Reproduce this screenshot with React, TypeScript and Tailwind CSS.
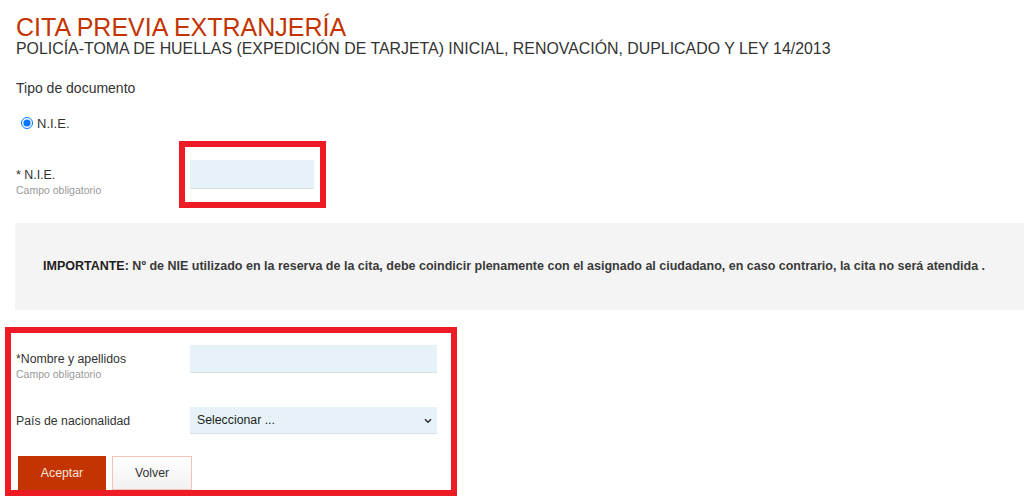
import React from "react";

export default function App() {
  return (
    <div className="w-[1024px] h-[498px] overflow-hidden bg-white font-['Liberation_Sans',Arial,sans-serif] text-[#333]">
      <div className="flex flex-col px-[16px] pt-[14px]">
        <h1 className="text-[25px] leading-[26px] text-[#c33400] font-normal">CITA PREVIA EXTRANJERÍA</h1>
        <h2 className="text-[15.9px] leading-[17px] text-[#333] font-normal">
          POLICÍA-TOMA DE HUELLAS (EXPEDICIÓN DE TARJETA) INICIAL, RENOVACIÓN, DUPLICADO Y LEY 14/2013
        </h2>

        <div className="mt-[23px] text-[14px] leading-[16px]">Tipo de documento</div>

        <label className="mt-[17px] flex h-[20px] items-center">
          <input type="radio" defaultChecked name="doc" className="ml-[5px] mr-[4px] h-[12px] w-[12px] accent-[#0075ff]" />
          <span className="text-[13px] leading-[15px]">N.I.E.</span>
        </label>

        <div className="mt-[8px] flex items-start">
          <div className="mt-[27px] flex w-[163px] flex-col">
            <span className="text-[12.4px] leading-[15px]">* N.I.E.</span>
            <span className="mt-[1px] text-[10.5px] leading-[13px] text-[#999]">Campo obligatorio</span>
          </div>
          <div className="border-[6px] border-[#ed1c24] py-[13px] pl-[5px] pr-[6px]">
            <input
              type="text"
              className="block h-[29px] w-[124px] border-0 border-b border-[#d6e0e5] bg-[#e6f2f7] outline-none"
            />
          </div>
        </div>

        <div className="mt-[15px] -ml-px -mr-[16px] flex h-[87px] items-center bg-[#f4f4f4] pl-[28px]">
          <p className="text-[12.5px] font-bold text-[#3a3a3a]">
            <span className="text-[#1e1e1e]">IMPORTANTE:</span> Nº de NIE utilizado en la reserva de la cita, debe coindicir plenamente con el asignado al ciudadano, en caso contrario, la cita no será atendida .
          </p>
        </div>

        <div className="mt-[17px] -ml-[11px] flex w-[452px] flex-col border-[6px] border-[#ed1c24] pl-[5px] pt-[12px]">
          <div className="flex items-start">
            <div className="mt-[6px] flex w-[174px] flex-col">
              <span className="text-[12.3px] leading-[16px]">*Nombre y apellidos</span>
              <span className="mt-[1px] text-[10.5px] leading-[13px] text-[#999]">Campo obligatorio</span>
            </div>
            <input
              type="text"
              className="block h-[28px] w-[247px] border-0 border-b border-[#d6e0e5] bg-[#e6f2f7] outline-none"
            />
          </div>

          <div className="mt-[26px] flex items-center">
            <span className="w-[174px] text-[12.3px] leading-[16px]">País de nacionalidad</span>
            <div className="relative h-[27px] w-[247px] border-b border-[#d6e0e5] bg-[#e6f2f7]">
              <div className="flex h-full items-center pl-[7px] text-[12.3px] text-[#1e1e1e]">Seleccionar ...</div>
              <svg className="absolute right-[5px] top-[11px]" width="8" height="6" viewBox="0 0 8 6">
                <path d="M1 1.2 L4 4.2 L7 1.2" fill="none" stroke="#333" strokeWidth="1.6" />
              </svg>
            </div>
          </div>

          <div className="mt-[22px] flex gap-[6px] pl-[2px]">
            <button className="h-[34px] w-[88px] bg-[#c33400] text-[12.3px] text-[#f8e3da]">Aceptar</button>
            <button className="h-[34px] w-[80px] border border-[#f0c4b6] bg-gradient-to-b from-white to-[#f1f1f1] text-[12.3px] text-[#333]">
              Volver
            </button>
          </div>
        </div>
      </div>
    </div>
  );
}
